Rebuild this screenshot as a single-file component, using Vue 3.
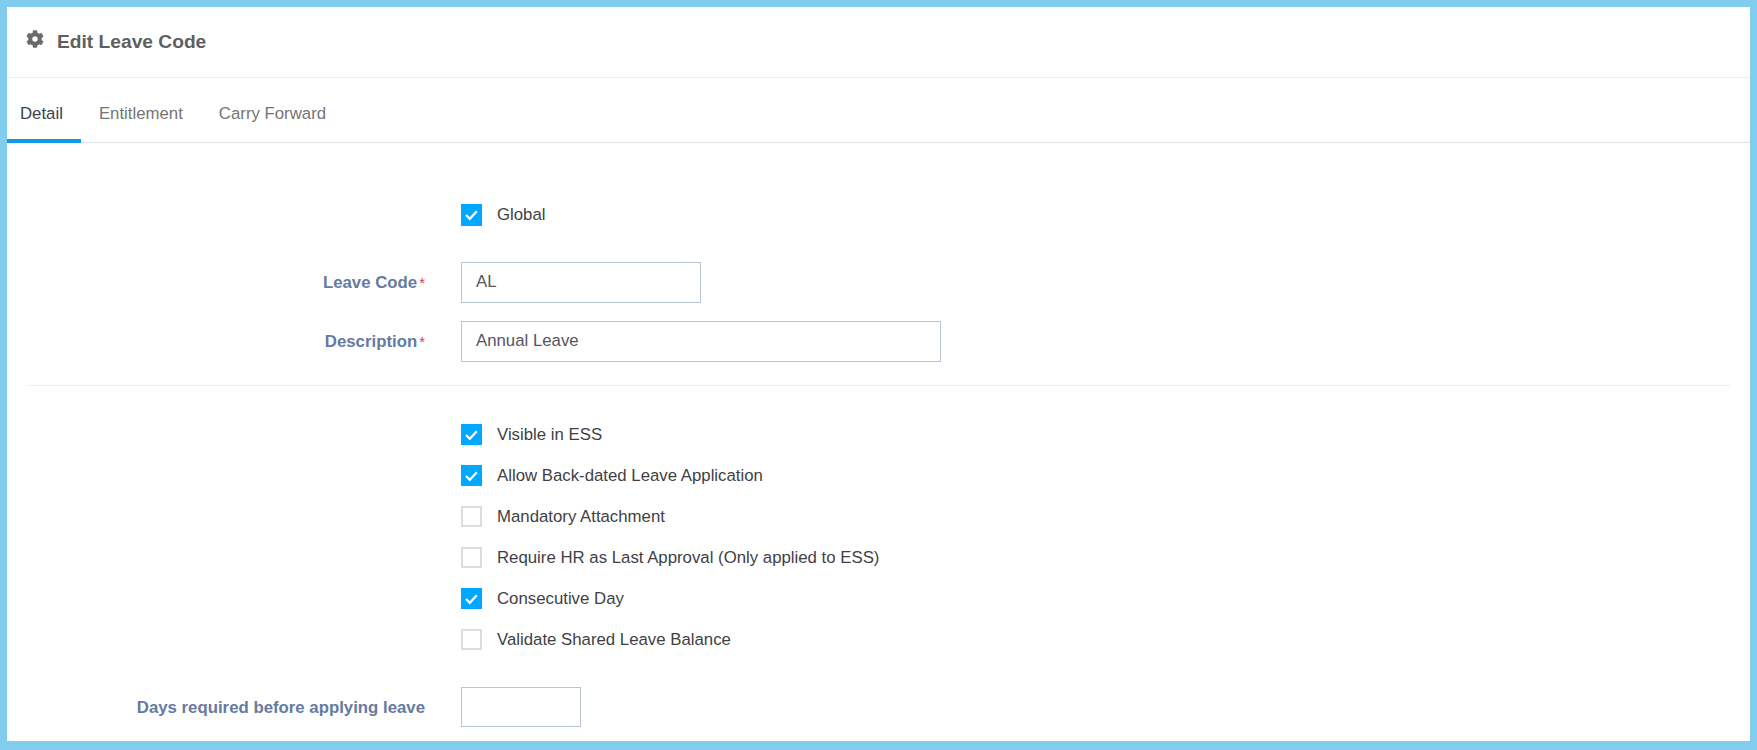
<script setup>
const topChecks = [
  { label: 'Visible in ESS', on: true },
  { label: 'Allow Back-dated Leave Application', on: true },
  { label: 'Mandatory Attachment', on: false },
  { label: 'Require HR as Last Approval (Only applied to ESS)', on: false },
  { label: 'Consecutive Day', on: true },
  { label: 'Validate Shared Leave Balance', on: false },
]
const tabs = ['Detail', 'Entitlement', 'Carry Forward']
</script>

<template>
  <div class="frame">
    <header class="head">
      <svg class="gear" viewBox="0 0 512 512"><path fill="#6b6b6b" d="M487.4 315.7l-42.6-24.6c4.3-23.2 4.3-47 0-70.2l42.6-24.6c4.9-2.8 7.1-8.6 5.5-14-11.1-35.6-30-67.8-54.7-94.6-3.8-4.1-10-5.1-14.8-2.3L380.8 110c-17.9-15.4-38.5-27.3-60.8-35.1V25.8c0-5.6-3.9-10.5-9.4-11.7-36.7-8.2-74.3-7.8-109.2 0-5.5 1.2-9.4 6.1-9.4 11.7V75c-22.2 7.9-42.8 19.8-60.8 35.1L88.7 85.5c-4.9-2.8-11-1.9-14.8 2.3-24.7 26.7-43.6 58.9-54.7 94.6-1.7 5.4.6 11.2 5.5 14L67.3 221c-4.3 23.2-4.3 47 0 70.2l-42.6 24.6c-4.9 2.8-7.1 8.6-5.5 14 11.1 35.6 30 67.8 54.7 94.6 3.8 4.1 10 5.1 14.8 2.3l42.6-24.6c17.9 15.4 38.5 27.3 60.8 35.1v49.2c0 5.6 3.9 10.5 9.4 11.7 36.7 8.2 74.3 7.8 109.2 0 5.5-1.2 9.4-6.1 9.4-11.7v-49.2c22.2-7.9 42.8-19.8 60.8-35.1l42.6 24.6c4.9 2.8 11 1.9 14.8-2.3 24.7-26.7 43.6-58.9 54.7-94.6 1.5-5.5-.7-11.3-5.6-14.1zM256 336c-44.1 0-80-35.9-80-80s35.9-80 80-80 80 35.9 80 80-35.9 80-80 80z"/></svg>
      <h1 class="title">Edit Leave Code</h1>
    </header>

    <nav class="tabs">
      <a v-for="(t, i) in tabs" :key="t" class="tab" :class="{ active: i === 0 }">{{ t }}</a>
    </nav>

    <form class="form">
      <div class="row check-first">
        <div class="lab"></div>
        <label class="chk">
          <span class="box on first"><svg viewBox="0 0 21 21"><path d="M5 11l3.8 3.8 7-7.6" fill="none" stroke="#fff" stroke-width="2.2"/></svg></span>
          <span>Global</span>
        </label>
      </div>

      <div class="row code">
        <div class="lab">Leave Code<i>*</i></div>
        <div class="inp w240">AL</div>
      </div>
      <div class="row desc">
        <div class="lab">Description<i>*</i></div>
        <div class="inp w480">Annual Leave</div>
      </div>

      <hr class="rule" />

      <div class="row checks">
        <div class="lab"></div>
        <div class="list">
          <label v-for="c in topChecks" :key="c.label" class="chk">
            <span class="box" :class="{ on: c.on }">
              <svg v-if="c.on" viewBox="0 0 21 21"><path d="M5 11l3.8 3.8 7-7.6" fill="none" stroke="#fff" stroke-width="2.2"/></svg>
            </span>
            <span>{{ c.label }}</span>
          </label>
        </div>
      </div>

      <div class="row days">
        <div class="lab">Days required before applying leave</div>
        <div class="inp w120"></div>
      </div>
    </form>
  </div>
</template>

<style>
html, body { margin: 0; background: #fff; }
</style>

<style scoped>
.frame {
  box-sizing: border-box;
  width: 1757px;
  height: 750px;
  overflow: hidden;
  border: 7px solid #81cdf0;
  border-bottom-width: 9px;
  background: #fff;
  font-family: "Liberation Sans", Arial, sans-serif;
  font-size: 16.8px;
  color: #3f3f46;
}
.head {
  box-sizing: border-box;
  height: 71px;
  display: flex;
  align-items: center;
  padding: 0 0 0 19px;
  border-bottom: 1px solid #eceef0;
}
.gear { width: 18px; height: 18px; margin-top: -6px; }
.title {
  margin: 0 0 0 13px;
  font-size: 19.2px;
  font-weight: 700;
  color: #5f5f5f;
}
.tabs {
  box-sizing: border-box;
  height: 65px;
  display: flex;
  border-bottom: 1px solid #dde4ea;
}
.tab {
  box-sizing: border-box;
  height: 65px;
  padding: 26px 14px 0 14px;
  margin-right: 8px;
  color: #757575;
  font-size: 16.8px;
  line-height: 20px;
}
.tab.active {
  color: #3a3f51;
  margin-right: 4px;
  padding-left: 13px;
  padding-right: 18px;
  border-bottom: 4px solid #0f9ae6;
}
.form { padding-top: 61px; }
.row { display: flex; align-items: center; }
.lab {
  box-sizing: border-box;
  width: 418px;
  margin-right: 36px;
  flex: none;
  text-align: right;
  font-weight: 700;
  color: #657ba0;
  font-size: 16.8px;
}
.lab i { font-style: normal; font-weight: 400; color: #e8384f; font-size: 15px; margin-left: 2px; }
.chk { display: flex; align-items: center; height: 22px; color: #3f3f46; }
.box {
  box-sizing: border-box;
  width: 21px;
  height: 21px;
  margin-right: 15px;
  margin-bottom: 1px;
  border: 2px solid #dddddd;
  flex: none;
}
.box svg { display: block; width: 21px; height: 21px; }
.box.on { background: #00a8ff; border: 0; }
.box.first { height: 22px; margin-bottom: 0; }
.code { margin-top: 36px; }
.desc { margin-top: 18px; }
.inp {
  box-sizing: border-box;
  height: 41px;
  padding: 0 14px;
  line-height: 38px;
  border: 1px solid #b9c5d6;
  color: #55555f;
}
.w240 { width: 240px; }
.w480 { width: 480px; }
.w120 { width: 120px; height: 40px; }
.rule {
  margin: 23px 20px 0 20px;
  border: 0;
  border-top: 1px solid #eceef0;
}
.checks { margin-top: 38px; align-items: flex-start; }
.list { display: flex; flex-direction: column; gap: 19px; }
.days { margin-top: 36px; }
.days .lab { padding-top: 2px; }
</style>
